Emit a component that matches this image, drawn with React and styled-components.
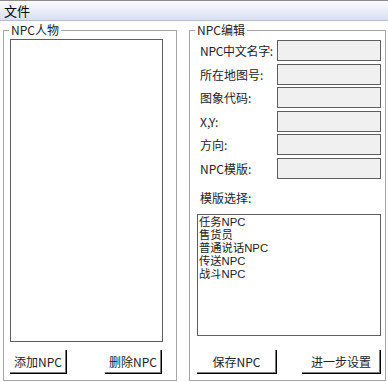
import React from "react";
import styled, { createGlobalStyle } from "styled-components";

const Global = createGlobalStyle`
  html, body {
    margin: 0;
    padding: 0;
    background: #fff;
  }
  body {
    font-family: "Noto Sans CJK SC", "DejaVu Sans", sans-serif;
    color: #000;
  }
`;

const Window = styled.div`
  width: 388px;
  height: 382px;
  display: flex;
  flex-direction: column;
  background: #fff;
  overflow: hidden;
`;

const MenuBar = styled.div`
  height: 19px;
  border-top: 1px solid #8c8c8c;
  border-bottom: 1px solid #b6bed6;
  background: linear-gradient(#fbfcfe, #d9dff1);
  display: flex;
  align-items: center;
  padding-left: 3px;
`;

const MenuItem = styled.span`
  font-size: 13px;
  line-height: 19px;
  padding: 0 1px;
`;

const Body = styled.div`
  display: flex;
  gap: 12px;
  padding: 2px 0 0 3px;
`;

const Group = styled.fieldset`
  margin: 0;
  padding: 0;
  width: ${(p) => p.$w}px;
  height: 358px;
  box-sizing: border-box;
  border: 1px solid #a6a6a6;
  display: flex;
  flex-direction: column;
`;

const Legend = styled.legend`
  margin-left: 5px;
  padding: 0 2px;
  font-size: 12px;
  line-height: 14px;
  color: #222;
`;

const ListBox = styled.div`
  box-sizing: border-box;
  width: ${(p) => p.$w}px;
  height: ${(p) => p.$h}px;
  margin: ${(p) => p.$m};
  border: 1px solid #5e5e5e;
  background: #fff;
  padding: 1px 1px 0;
`;

const ListItem = styled.div`
  font-family: "Liberation Sans", "Noto Sans CJK SC", sans-serif;
  font-size: 11.3px;
  line-height: 13px;
  height: 13px;
  color: #222;
  white-space: nowrap;
`;

const ButtonRow = styled.div`
  display: flex;
  justify-content: space-between;
  margin: ${(p) => p.$m};
`;

const Button = styled.button`
  box-sizing: border-box;
  width: ${(p) => p.$w}px;
  height: 24px;
  padding: 0;
  background: #fff;
  border: none;
  border-right: 1px solid #000;
  border-bottom: 1px solid #000;
  box-shadow: inset -1px -1px 0 #7a7a7a;
  font-family: inherit;
  font-size: 12px;
  color: #222;
`;

const Form = styled.div`
  display: grid;
  grid-template-columns: 77px 104px;
  grid-auto-rows: 21px;
  row-gap: 2.6px;
  padding: 3px 0 0 10px;
`;

const Label = styled.div`
  font-size: 12px;
  line-height: 21px;
  color: #222;
  white-space: nowrap;
  letter-spacing: ${(p) => (p.$tight ? "-0.3px" : "0")};
`;

const Field = styled.div`
  box-sizing: border-box;
  border: 1px solid #5e5e5e;
  background: #f0f0f0;
`;

const SelectLabel = styled(Label)`
  margin: 8px 0 0 10px;
`;

const fields = [
  "NPC中文名字:",
  "所在地图号:",
  "图象代码:",
  "X,Y:",
  "方向:",
  "NPC模版:",
];

const templates = ["任务NPC", "售货员", "普通说话NPC", "传送NPC", "战斗NPC"];

export default function App() {
  return (
    <>
      <Global />
      <Window>
        <MenuBar>
          <MenuItem>文件</MenuItem>
        </MenuBar>
        <Body>
          <Group $w={174}>
            <Legend>NPC人物</Legend>
            <ListBox $w={153} $h={303} $m="2px 0 0 6px" />
            <ButtonRow $m="8px 14px 0 6px">
              <Button $w={57}>添加NPC</Button>
              <Button $w={57}>删除NPC</Button>
            </ButtonRow>
          </Group>
          <Group $w={197}>
            <Legend>NPC编辑</Legend>
            <Form>
              {fields.map((f) => (
                <React.Fragment key={f}>
                  <Label $tight={f.startsWith("NPC中")}>{f}</Label>
                  <Field />
                </React.Fragment>
              ))}
            </Form>
            <SelectLabel>模版选择:</SelectLabel>
            <ListBox $w={184} $h={122} $m="6px 0 0 7px">
              {templates.map((t) => (
                <ListItem key={t}>{t}</ListItem>
              ))}
            </ListBox>
            <ButtonRow $m="14px 4px 0 7px">
              <Button $w={80}>保存NPC</Button>
              <Button $w={79}>进一步设置</Button>
            </ButtonRow>
          </Group>
        </Body>
      </Window>
    </>
  );
}
